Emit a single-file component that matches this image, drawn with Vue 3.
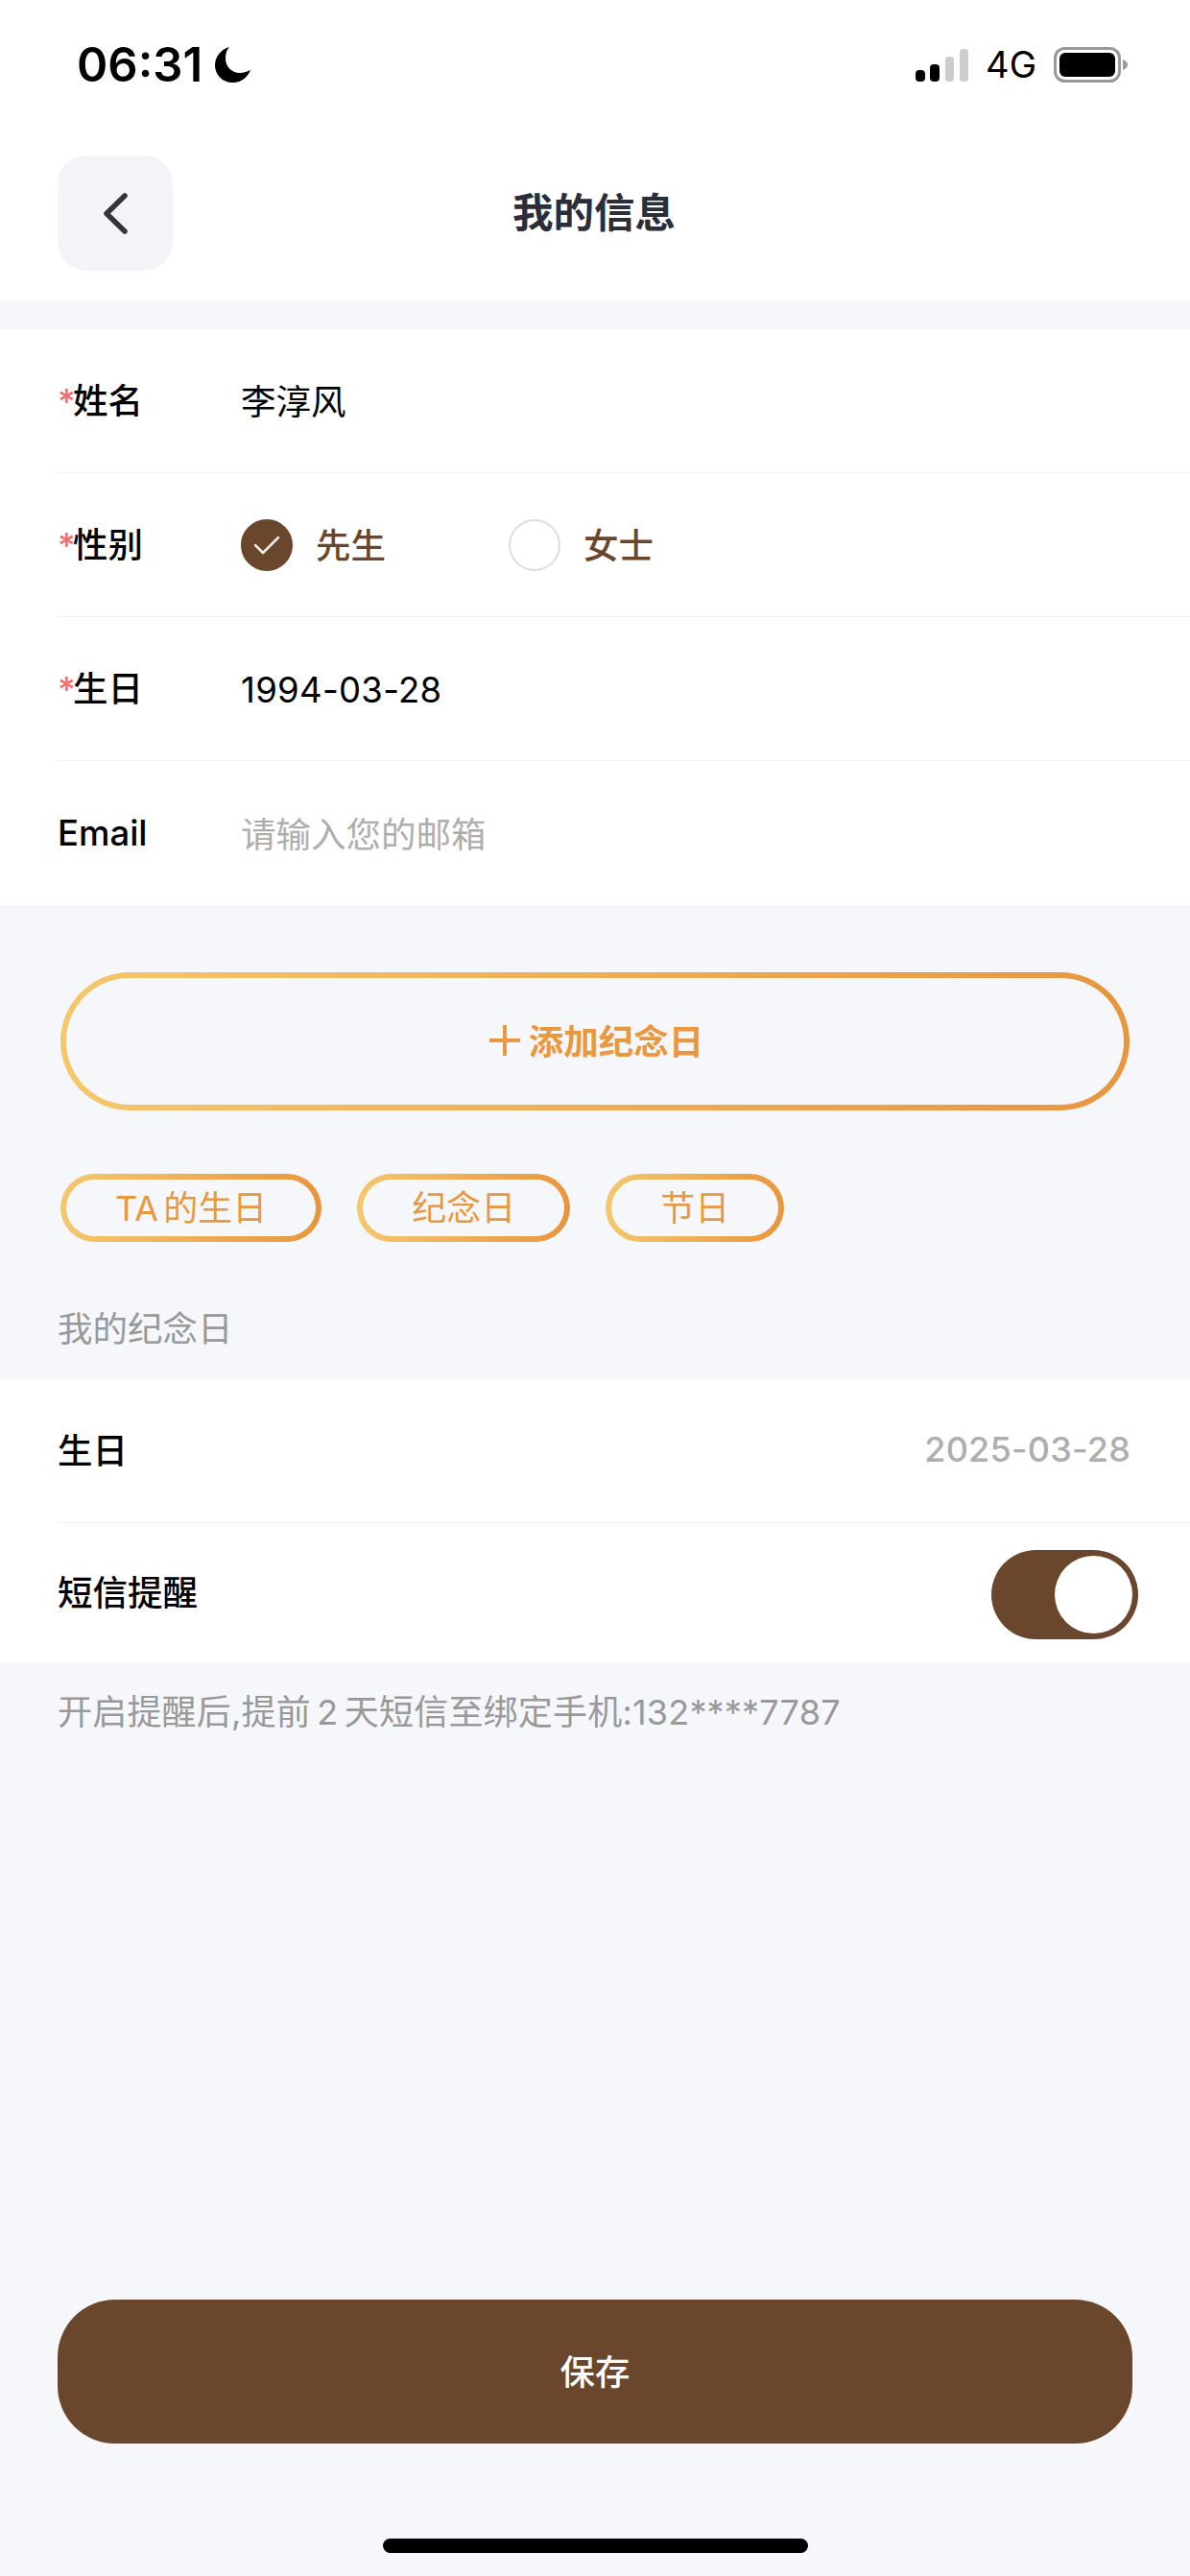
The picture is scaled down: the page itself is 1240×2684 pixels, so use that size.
<script setup>
import { ref } from 'vue'

const gender = ref('male')
const smsOn = ref(true)
const quickTags = ['TA 的生日', '纪念日', '节日']
</script>

<template>
  <div class="page">
    <div class="top">
      <div class="status-bar">
        <div class="status-left">
          <span class="time">06:31</span>
          <svg class="moon" width="37" height="37" viewBox="0 0 37 37">
            <path d="M15 0C5 3 0 11 0 19c0 10 8 18 18 18 9 0 16-5 19-13-4 2-8 3-11 3-9 0-15-7-15-15 0-5 1-9 4-12z" fill="#000" />
          </svg>
        </div>
        <div class="status-right">
          <svg width="55" height="34" viewBox="0 0 55 34">
            <rect x="0" y="22" width="10" height="12" rx="4" fill="#000" />
            <rect x="15" y="16" width="10" height="18" rx="4" fill="#000" />
            <rect x="31" y="8" width="9" height="26" rx="3.5" fill="#ccc" />
            <rect x="46" y="0" width="9" height="34" rx="3.5" fill="#ccc" />
          </svg>
          <span class="net">4G</span>
          <svg width="78" height="37" viewBox="0 0 78 37">
            <rect x="1.5" y="1.5" width="67" height="34" rx="10" fill="none" stroke="#999" stroke-width="3" />
            <rect x="6" y="6" width="58" height="25" rx="6" fill="#000" />
            <path d="M72 13c3 1 5 3 5 5.500s-2 4.500-5 5.500z" fill="#999" />
          </svg>
        </div>
      </div>
      <div class="nav">
        <button class="back" aria-label="返回">
          <svg width="26" height="43" viewBox="0 0 26 43">
            <path d="M23 3 4 21.500 23 40" fill="none" stroke="#33343c" stroke-width="5.500" stroke-linecap="round" stroke-linejoin="round" />
          </svg>
        </button>
        <span class="nav-title">我的信息</span>
      </div>
    </div>

    <div class="card form">
      <div class="row">
        <span class="label cjk"><i class="star">*</i>姓名</span>
        <span class="value cjk-value">李淳风</span>
      </div>
      <div class="row">
        <span class="label cjk"><i class="star">*</i>性别</span>
        <div class="radios">
          <div class="radio" @click="gender = 'male'">
            <span :class="['dot', { on: gender === 'male' }]">
              <svg v-if="gender === 'male'" width="28" height="20" viewBox="0 0 28 20">
                <path d="M2 10l8 8L26 2" fill="none" stroke="#f1ece8" stroke-width="2.500" stroke-linecap="round" stroke-linejoin="round" />
              </svg>
            </span>
            <span class="radio-text">先生</span>
          </div>
          <div class="radio" @click="gender = 'female'">
            <span :class="['dot', { on: gender === 'female' }]">
              <svg v-if="gender === 'female'" width="28" height="20" viewBox="0 0 28 20">
                <path d="M2 10l8 8L26 2" fill="none" stroke="#f1ece8" stroke-width="2.500" stroke-linecap="round" stroke-linejoin="round" />
              </svg>
            </span>
            <span class="radio-text">女士</span>
          </div>
        </div>
      </div>
      <div class="row">
        <span class="label cjk"><i class="star">*</i>生日</span>
        <span class="value num">1994-03-28</span>
      </div>
      <div class="row">
        <span class="label">Email</span>
        <span class="value cjk-value placeholder">请输入您的邮箱</span>
      </div>
    </div>

    <button class="add-btn">
      <svg width="32" height="32" viewBox="0 0 32 32">
        <path d="M0 16h32M16 0v32" stroke="#e9983f" stroke-width="4" />
      </svg>
      <span>添加纪念日</span>
    </button>

    <div class="tags">
      <span v-for="t in quickTags" :key="t" class="tag">{{ t }}</span>
    </div>

    <div class="section-title">我的纪念日</div>

    <div class="card days">
      <div class="row between">
        <span class="label cjk">生日</span>
        <span class="date">2025-03-28</span>
      </div>
      <div class="row between">
        <span class="label cjk">短信提醒</span>
        <div :class="['switch', { on: smsOn }]" @click="smsOn = !smsOn">
          <span class="knob"></span>
        </div>
      </div>
    </div>

    <div class="hint">开启提醒后,提前 2 天短信至绑定手机:132****7787</div>

    <button class="save">保存</button>
    <div class="home-bar"></div>
  </div>
</template>

<style>
html, body {
  margin: 0;
  background: #f5f7fb;
}
</style>

<style scoped>
.page {
  min-height: 2684px;
  display: flex;
  flex-direction: column;
  background: #f5f7fb;
  color: #000;
  font-family: Inter, "Noto Sans CJK SC", sans-serif;
  font-size: 36.5px;
}
.top {
  height: 312px;
  background: #fff;
}
.status-bar {
  height: 132px;
  padding: 49px 64px 0 80px;
  box-sizing: border-box;
  display: flex;
  justify-content: space-between;
  align-items: flex-start;
}
.status-left {
  display: flex;
  align-items: center;
  gap: 13px;
}
.time {
  font-size: 49px;
  font-weight: 600;
  line-height: 37px;
}
.moon {
  display: block;
}
.status-right {
  display: flex;
  align-items: center;
  gap: 18px;
}
.status-right svg {
  display: block;
}
.net {
  font-size: 38px;
  line-height: 37px;
}
.nav {
  position: relative;
  padding: 30px 60px 0;
  display: flex;
  align-items: center;
  justify-content: center;
}
.back {
  position: absolute;
  left: 60px;
  top: 30px;
  width: 120px;
  height: 120px;
  padding: 0;
  border: none;
  border-radius: 30px;
  background: #f3f4f7;
  display: flex;
  align-items: center;
  justify-content: center;
}
.nav-title {
  height: 120px;
  line-height: 120px;
  margin-right: 2px;
  font-size: 42.5px;
  font-weight: 600;
  color: #2b2d3a;
}
.card {
  background: #fff;
}
.form {
  margin-top: 31px;
}
.row {
  height: 150px;
  margin-left: 60px;
  box-sizing: border-box;
  border-bottom: 1.5px solid #f2f2f2;
  display: flex;
  align-items: center;
}
.row:last-child {
  border-bottom: none;
}
.between {
  justify-content: space-between;
  padding-right: 62px;
}
.label {
  width: 191px;
  flex: 0 0 auto;
  font-weight: 500;
  white-space: nowrap;
}
.label.cjk {
  margin-bottom: 5px;
}
.between .label {
  width: auto;
}
.star {
  color: #f56c6c;
  font-style: normal;
  font-size: 36px;
  display: inline-block;
  width: 16px;
}
.cjk-value {
  margin-bottom: 2px;
}
.num {
  margin-top: 2px;
  letter-spacing: 0.3px;
}
.placeholder {
  color: #aeaeae;
}
.radios {
  display: flex;
}
.radio {
  width: 279px;
  display: flex;
  align-items: center;
  gap: 24px;
}
.dot {
  width: 54px;
  height: 54px;
  box-sizing: border-box;
  border-radius: 50%;
  border: 2px solid #ddd;
  display: flex;
  align-items: center;
  justify-content: center;
}
.dot.on {
  background: #6a462d;
  border-color: #6a462d;
}
.radio-text {
  color: #6a462d;
  font-weight: 500;
  margin-bottom: 3px;
}
.add-btn {
  margin: 70px 63px 0;
  height: 144px;
  padding: 0 0 3px 3px;
  box-sizing: border-box;
  border: 6px solid transparent;
  border-radius: 72px;
  background: linear-gradient(#f5f7fb, #f5f7fb) padding-box,
    linear-gradient(90deg, #f5c76b, #e8963e) border-box;
  display: flex;
  align-items: center;
  justify-content: center;
  gap: 9px;
  color: #e9983f;
  font: 600 36.5px Inter, "Noto Sans CJK SC", sans-serif;
}
.tags {
  margin: 66px 0 0 63px;
  display: flex;
  gap: 37px;
}
.tag {
  height: 71px;
  line-height: 61px;
  padding: 0 51px;
  box-sizing: border-box;
  border: 6px solid transparent;
  border-radius: 36px;
  background: linear-gradient(#f5f7fb, #f5f7fb) padding-box,
    linear-gradient(90deg, #f5c76b, #e8963e) border-box;
  color: #e9983f;
  font-size: 36px;
  word-spacing: -5px;
}
.section-title {
  margin: 66px 0 0 60px;
  height: 50px;
  line-height: 50px;
  color: #999;
}
.days {
  margin-top: 27px;
}
.days .row:last-child {
  height: 145px;
}
.date {
  color: #aeaeae;
  font-size: 36px;
  font-weight: 500;
  letter-spacing: 0.2px;
  margin-bottom: 3px;
}
.switch {
  width: 153px;
  height: 93px;
  box-sizing: border-box;
  padding: 6px;
  margin: 3px -8px 0 0;
  border-radius: 47px;
  background: #6a462d;
  display: flex;
  justify-content: flex-end;
}
.switch:not(.on) {
  background: #ddd;
  justify-content: flex-start;
}
.knob {
  width: 81px;
  height: 81px;
  border-radius: 50%;
  background: #fff;
}
.hint {
  margin: 27px 0 0 60px;
  height: 50px;
  line-height: 50px;
  color: #999;
  font-size: 36px;
  word-spacing: -4px;
  letter-spacing: 0.2px;
}
.save {
  margin: auto 60px 0;
  height: 150px;
  padding: 0 0 4px;
  border: none;
  border-radius: 60px;
  background: #6a462d;
  color: #fff;
  font: 500 36.5px Inter, "Noto Sans CJK SC", sans-serif;
}
.home-bar {
  width: 443px;
  height: 15px;
  margin: 99px auto 24px;
  border-radius: 8px;
  background: #000;
}
</style>
